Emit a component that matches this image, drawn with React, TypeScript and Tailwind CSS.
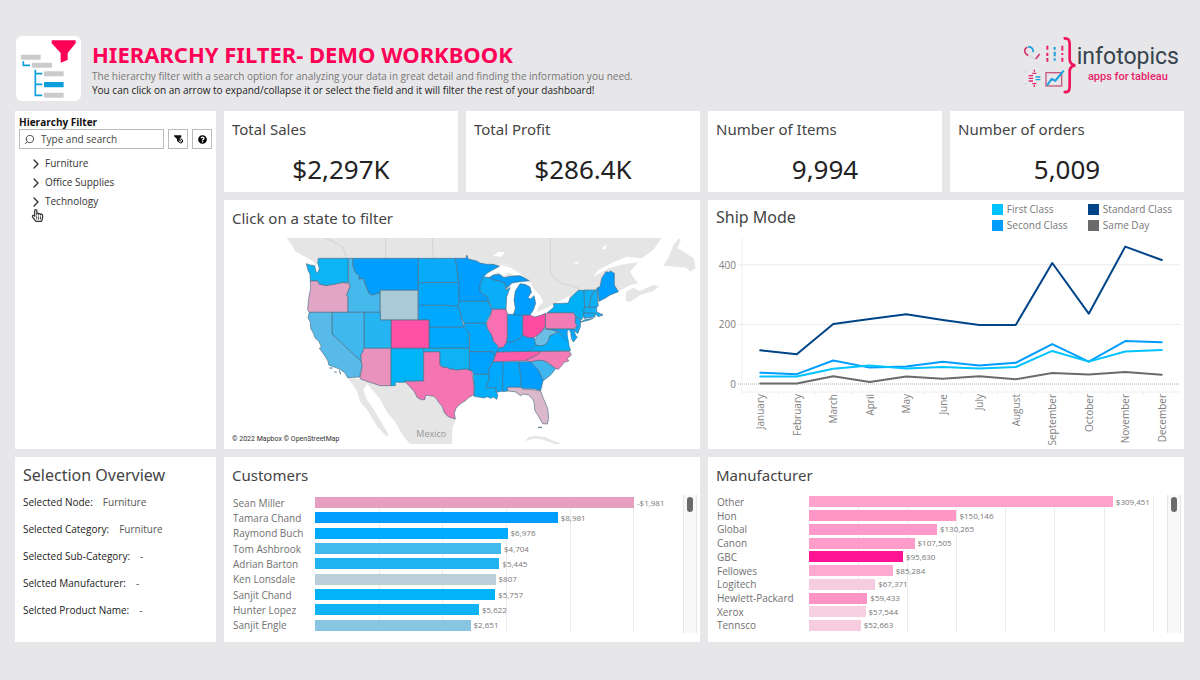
import { useState } from "react";
import { ChevronRight, Search } from "lucide-react";
import { FaQuestionCircle, FaRegHandPointer } from "react-icons/fa";

interface BarItem {
  name: string;
  size: number;
  label: string;
  color: string;
}

interface StateShape {
  id: string;
  fill: string;
  d: string;
}

const categories = ["Furniture", "Office Supplies", "Technology"];

const totals = [
  { title: "Total Sales", value: "$2,297K" },
  { title: "Total Profit", value: "$286.4K" },
  { title: "Number of Items", value: "9,994" },
  { title: "Number of orders", value: "5,009" },
];

const selection = [
  { label: "Selected Node:", value: "Furniture" },
  { label: "Selected Category:", value: "Furniture" },
  { label: "Selected Sub-Category:", value: "-" },
  { label: "Selcted Manufacturer:", value: "-" },
  { label: "Selcted Product Name:", value: "-" },
];

const customers: BarItem[] = [
  { name: "Sean Miller", size: 25043, label: "-$1,981", color: "#e69fc1" },
  { name: "Tamara Chand", size: 19052, label: "$8,981", color: "#009dff" },
  { name: "Raymond Buch", size: 15117, label: "$6,976", color: "#00abff" },
  { name: "Tom Ashbrook", size: 14596, label: "$4,704", color: "#42b9ec" },
  { name: "Adrian Barton", size: 14474, label: "$5,445", color: "#1fb3f2" },
  { name: "Ken Lonsdale", size: 14175, label: "$807", color: "#bacfd7" },
  { name: "Sanjit Chand", size: 14142, label: "$5,757", color: "#02b3f8" },
  { name: "Hunter Lopez", size: 12873, label: "$5,622", color: "#12b3f5" },
  { name: "Sanjit Engle", size: 12209, label: "$2,651", color: "#88c5e0" },
];

const manufacturers: BarItem[] = [
  { name: "Other", size: 309451, label: "$309,451", color: "#ffa3cd" },
  { name: "Hon", size: 150146, label: "$150,146", color: "#ff96c6" },
  { name: "Global", size: 130265, label: "$130,265", color: "#ff9aca" },
  { name: "Canon", size: 107505, label: "$107,505", color: "#ff9cc9" },
  { name: "GBC", size: 95630, label: "$95,630", color: "#ff1493" },
  { name: "Fellowes", size: 85284, label: "$85,284", color: "#ffa8d0" },
  { name: "Logitech", size: 67371, label: "$67,371", color: "#f6cddf" },
  { name: "Hewlett-Packard", size: 59433, label: "$59,433", color: "#ff94c5" },
  { name: "Xerox", size: 57544, label: "$57,544", color: "#f6d1e0" },
  { name: "Tennsco", size: 52663, label: "$52,663", color: "#f6cddf" },
  { name: "", size: 52000, label: "", color: "#ffb4d8" },
];

const months = [
  "January",
  "February",
  "March",
  "April",
  "May",
  "June",
  "July",
  "August",
  "September",
  "October",
  "November",
  "December",
];

const shipModes = [
  {
    name: "Same Day",
    color: "#6b6b6b",
    values: [2, 2, 26, 7, 25, 18, 26, 16, 37, 32, 40, 31],
  },
  {
    name: "Second Class",
    color: "#009dff",
    values: [38, 33, 79, 55, 59, 75, 62, 71, 134, 75, 144, 140],
  },
  {
    name: "First Class",
    color: "#00c3ff",
    values: [25, 25, 51, 62, 52, 57, 52, 57, 111, 75, 109, 114],
  },
  {
    name: "Standard Class",
    color: "#004488",
    values: [113, 100, 201, 218, 234, 215, 198, 198, 406, 236, 461, 416],
  },
];

const legend = [
  { name: "First Class", swatch: "bg-[#00c3ff]" },
  { name: "Standard Class", swatch: "bg-[#004488]" },
  { name: "Second Class", swatch: "bg-[#009dff]" },
  { name: "Same Day", swatch: "bg-[#6b6b6b]" },
];

const states: StateShape[] = [
  { id: "WA", fill: "#0cb4f6", d: "M79,86L90,90L104,92L108,110L113,114L118,100L113,84L115,70H205V142L186,143L165,148L138,152L118,148L113,138H91L90,118L84,106Z" },
  { id: "OR", fill: "#e3a5c6", d: "M91,138H113L118,148L138,152L165,148L186,143L208,145L211,153L200,180L204,185V232H88L83,225L86,190L92,160Z" },
  { id: "ID", fill: "#45b8ec", d: "M205,70H219V92L226,112L238,122L237,132L250,130L257,150L268,176L276,180L290,176L300,172V232H204V185L200,180L211,153L205,142Z" },
  { id: "MT", fill: "#009eff", d: "M219,70H415V166H301L300,172L290,176L276,180L268,176L257,150L250,130L237,132L238,122L226,112L219,92Z" },
  { id: "WY", fill: "#a9cbd8", d: "M301,166H414V255H301Z" },
  { id: "ND", fill: "#08abf7", d: "M415,70H526L530,95L533,120L536,143H415Z" },
  { id: "SD", fill: "#00a8ff", d: "M415,143H536L537,155V198L534,215L520,213L505,211H415Z" },
  { id: "NE", fill: "#00a8ff", d: "M415,211H505L520,213L534,216L541,230L545,255L553,277H447V255H415Z" },
  { id: "KS", fill: "#00a8ff", d: "M447,277H556L561,283L560,287L567,292L568,340H447Z" },
  { id: "CO", fill: "#ff50a5", d: "M333,255H447V340H333Z" },
  { id: "UT", fill: "#25b5f2", d: "M252,232H301V255H333V340H252Z" },
  { id: "NV", fill: "#3fb8ef", d: "M156,232H252V345L247,354L243,358L244,380L156,297Z" },
  { id: "CA", fill: "#57bae8", d: "M88,232H156V297L244,380L247,395L241,410L240,426L203,428L195,414L180,403L163,396L146,390L144,378L130,356L118,340L124,335L116,318L106,310L100,295L92,280L91,262L84,248Z" },
  { id: "AZ", fill: "#e892bd", d: "M252,340H333V452H300L241,432L240,426L247,395L244,380L243,358L247,354Z" },
  { id: "NM", fill: "#00b4f8", d: "M333,340H431V438H375V442H346V452H333Z" },
  { id: "TX", fill: "#f475b2", d: "M431,350H480V390L489,396L500,397L510,402L520,402L528,405L545,403L560,402L576,408L578,430L583,455L581,480L567,487L558,496L548,502L540,507L528,520L523,535L526,552L505,545L494,535L486,513L476,502L470,492L462,484L438,481L434,494L424,494L412,488L403,470L390,455L375,440L431,438Z" },
  { id: "OK", fill: "#0fb2f5", d: "M431,340H568L569,365L568,405L560,402L545,403L528,405L520,402L510,402L500,397L489,396L480,390V350H431Z" },
  { id: "MN", fill: "#009eff", d: "M526,70H558L560,60L565,72L590,78L600,84L620,88L640,88L658,94L625,112L610,125L600,150V170L622,185L626,199H537V155L533,120L530,95Z" },
  { id: "IA", fill: "#06a9f8", d: "M537,199H626L628,208L637,222L630,240L623,252L618,265H552L545,250L541,230L534,215Z" },
  { id: "MO", fill: "#00a8ff", d: "M552,265H618L622,280L636,302L640,318L652,330L656,345L650,352L643,365L638,358L640,350H569V296L560,285L553,277Z" },
  { id: "AR", fill: "#00a2ff", d: "M568,350H640L638,358H646L640,378L628,400L626,418H580L578,408L568,405Z" },
  { id: "LA", fill: "#00b0fa", d: "M580,418H626L628,432L620,450L618,458H648V470L654,480L650,493L640,486L632,490L622,485L612,489L600,487L582,484L583,455Z" },
  { id: "MS", fill: "#00a8ff", d: "M640,380H670V430L668,468L650,472L648,458H618L620,450L628,432L626,418L628,400Z" },
  { id: "AL", fill: "#00a8ff", d: "M670,380H716L722,425L724,457H682L684,468L668,470V430Z" },
  { id: "GA", fill: "#009eff", d: "M716,380H760L775,405L790,435L786,450L782,467L765,462L724,460L722,425Z" },
  { id: "FL", fill: "#dbb9cb", d: "M682,457H724L727,462L765,465L778,468L780,463L790,490L803,520L806,550L802,567L788,566L776,545L764,525L763,505L758,492L745,480L730,477L722,482L705,470L684,468Z" },
  { id: "SC", fill: "#3fb6ee", d: "M752,382L772,376L786,376L800,382L828,400L812,420L790,437L775,405Z" },
  { id: "NC", fill: "#f47cb5", d: "M734,377L760,365L782,349H868L874,360L862,370L866,378L852,382L845,392L835,403L826,400L800,380L786,376L772,376L752,380Z" },
  { id: "TN", fill: "#fb5ba8", d: "M650,350L782,349L776,358L760,365L736,377L640,380Z" },
  { id: "KY", fill: "#00a4ff", d: "M656,340L680,322L700,320L720,310L727,300L745,308L762,308L772,328L760,338L748,349L650,351Z" },
  { id: "WV", fill: "#6bbfe6", d: "M764,318L772,300L785,290L796,272L797,282L815,284L833,290L822,298L810,302L805,318L795,330L780,333L768,330Z" },
  { id: "VA", fill: "#00aeff", d: "M748,349L760,338L768,330L780,333L795,330L805,318L810,302L822,298L834,290L850,305L866,318L868,335L872,347Z" },
  { id: "MD", fill: "#06a4fb", d: "M797,282H882L886,300L892,306L880,321L874,310L872,290L862,288L862,300L870,315L868,322L850,308L836,290L815,284Z" },
  { id: "PA", fill: "#f47cb5", d: "M796,240L802,233H880L888,245L886,265L892,272L882,281H797Z" },
  { id: "NJ", fill: "#0aa8fb", d: "M886,245L902,254L901,275L893,296L882,285L892,272L886,265Z" },
  { id: "OH", fill: "#ff4ba2", d: "M728,240H748L765,246L785,240L796,235V272L785,290L772,300L762,308L745,308L728,300Z" },
  { id: "IN", fill: "#00a4ff", d: "M682,238H728V300L720,310L700,320L680,322L682,305Z" },
  { id: "IL", fill: "#f96fb1", d: "M637,222H678L682,238V305L678,325L670,337L656,338L652,330L640,318L636,302L622,280L620,265L630,245Z" },
  { id: "WI", fill: "#0aaef8", d: "M600,150L610,125L628,128L640,134L660,138L675,145L678,165L690,158L680,185L678,222H637L626,199L622,185L600,170Z" },
  { id: "MI-upper", fill: "#009eff", d: "M628,128L640,120L658,118L672,128L690,124L720,122L735,130L748,137L720,140L695,144L680,160L675,145L660,138L640,134Z" },
  { id: "MI-lower", fill: "#009eff", d: "M706,168L720,146L735,148L750,156L754,172L744,188L752,192L762,182L767,205L760,225L750,240H700L706,220L702,195Z" },
  { id: "NY", fill: "#00b0f5", d: "M802,233L822,216L820,206L865,204L870,190L895,166H912L914,215L912,240L905,254L888,245L880,233Z" },
  { id: "VT", fill: "#10b0f5", d: "M912,165H947L936,180L932,190L928,217H914Z" },
  { id: "NH", fill: "#10b0f5", d: "M947,165L953,158V190L955,213L950,217H928L932,190L936,180Z" },
  { id: "ME", fill: "#009eff", d: "M953,158L960,155L965,130L978,110L986,112L992,108L1003,115V150L1015,170L990,180L975,190L957,199Z" },
  { id: "MA", fill: "#10b0f5", d: "M913,217H950L950,230L968,240L955,245L945,236L911,234Z" },
  { id: "CT", fill: "#10aaf5", d: "M911,234H945V246L912,250Z" },
  { id: "NY-island", fill: "#00b0f5", d: "M900,262L915,254L940,250L925,256Z" },
];

const MAX_CUSTOMER = 28890;
const MAX_MANUFACTURER = 364600;

const App: React.FC = () => {
  return (
    <div className="min-h-screen bg-[#e7e6e8] pt-9 pr-4 pb-9 pl-[15px] font-['Open_Sans',sans-serif] text-[#555]">
      <Header />
      <main className="mt-[10px] grid grid-cols-[201px_repeat(4,minmax(0,1fr))] gap-2">
        <HierarchyFilter />
        {totals.map((total) => (
          <section key={total.title} className="bg-white px-2 pt-2 pb-[3px]">
            <PanelTitle text={total.title} />
            <p className="mt-3 text-center font-['Noto_Sans',sans-serif] text-[26px] leading-9 text-[#222] pb-[2px]">
              {total.value}
            </p>
          </section>
        ))}
        <section className="relative col-span-2 bg-white pt-2 pb-[5px]">
          <div className="px-2">
            <PanelTitle text="Click on a state to filter" />
          </div>
          <StateMap />
          <p className="absolute bottom-1 left-2 font-[Roboto,sans-serif] text-[7px] leading-3 text-[#333]">
            © 2022 Mapbox © OpenStreetMap
          </p>
        </section>
        <section className="col-span-2 bg-white pb-px">
          <div className="flex h-[38px] items-center justify-between pr-3 pb-1 pl-2">
            <PanelTitle text="Ship Mode" large />
            <ul className="grid grid-cols-[96px_auto] text-[10px] leading-4 text-[#777]">
              {legend.map((item) => (
                <li key={item.name} className="flex items-center gap-1">
                  <span className={`h-[11px] w-[11px] ${item.swatch}`} />
                  {item.name}
                </li>
              ))}
            </ul>
          </div>
          <ShipChart />
        </section>
        <section className="bg-white px-2 pt-2">
          <PanelTitle text="Selection Overview" large />
          <dl className="mt-[7px] flex flex-col gap-[7px] text-[10px] leading-5">
            {selection.map((row) => (
              <div key={row.label} className="flex gap-[10px]">
                <dt className="font-medium text-[#222]">{row.label}</dt>
                <dd>{row.value}</dd>
              </div>
            ))}
          </dl>
        </section>
        <section className="col-span-2 bg-white pt-2 pr-[3px] pb-[9px] pl-2">
          <PanelTitle text="Customers" />
          <div className="mt-[10px] flex h-[138px]">
            <BarList
              items={customers}
              max={MAX_CUSTOMER}
              step={5000}
              labelWidth="w-[83px]"
              listHeight="h-[138px]"
            />
            <ScrollTrack />
          </div>
        </section>
        <section className="col-span-2 bg-white pt-2 pr-[3px] pb-[9px] pl-2">
          <PanelTitle text="Manufacturer" />
          <div className="mt-[10px] flex h-[138px]">
            <BarList
              items={manufacturers}
              max={MAX_MANUFACTURER}
              step={50000}
              labelWidth="w-[93px]"
              listHeight="h-[151px]"
            />
            <ScrollTrack />
          </div>
        </section>
      </main>
    </div>
  );
};

interface PanelTitleProps {
  text: string;
  large?: boolean;
}

const PanelTitle: React.FC<PanelTitleProps> = ({ text, large }) => {
  return (
    <h2
      className={`font-['Noto_Sans',sans-serif] leading-5 text-[#444] ${
        large ? "text-[16px]" : "text-[15px]"
      }`}
    >
      {text}
    </h2>
  );
};

const Header: React.FC = () => {
  return (
    <header className="flex items-start">
      <AppIcon />
      <div className="ml-[11px] flex-1 pt-[3px]">
        <h1 className="font-['Noto_Sans',sans-serif] text-[22px] leading-[30px] font-bold text-[#ff0057]">
          HIERARCHY FILTER- DEMO WORKBOOK
        </h1>
        <p className="text-[10px] leading-[14px] text-[#777]">
          The hierarchy filter with a search option for analyzing your data in
          great detail and finding the information you need.
        </p>
        <p className="text-[10px] leading-[14px] font-medium text-[#222]">
          You can click on an arrow to expand/collapse it or select the field
          and it will filter the rest of your dashboard!
        </p>
      </div>
      <div className="flex items-center pr-[5px]">
        <LogoMark />
        <div className="pb-1 font-[Roboto,sans-serif]">
          <p className="text-[23px] leading-[26px] text-[#36444e]">
            infotopics
          </p>
          <p className="text-center text-[11px] leading-[14px] font-medium text-[#e8246c]">
            apps for tableau
          </p>
        </div>
      </div>
    </header>
  );
};

const AppIcon: React.FC = () => {
  return (
    <svg
      className="ml-px h-[65px] w-[65px] rounded-md bg-white"
      aria-hidden="true"
      viewBox="0 0 195 195"
      fill="none"
    >
      <path d="M107 13H179V22L155 51V72L134 80V51L107 22Z" fill="#ff0057" />
      <g fill="#cbcbcb">
        <rect x="15" y="56" width="59" height="15" rx="2" />
        <rect x="48" y="80" width="60" height="15" rx="2" />
        <rect x="84" y="106" width="59" height="15" rx="2" />
        <rect x="84" y="170" width="59" height="15" rx="2" />
      </g>
      <rect x="84" y="138" width="59" height="16" rx="2" fill="#0d9ddb" />
      <path
        d="M22 76V88H42M58 101V178H79M58 113H79M58 145H79"
        stroke="#0d9ddb"
        strokeWidth="5"
      />
    </svg>
  );
};

const LogoMark: React.FC = () => {
  return (
    <svg
      className="h-[60px] w-[54px]"
      aria-hidden="true"
      viewBox="0 0 162 180"
      fill="none"
      strokeWidth="5"
    >
      <path
        d="M122 7C137 6 140 12 140 25V69C140 81 145 87 157 88C145 89 140 95 140 107V150C140 164 137 170 122 168"
        stroke="#f0145c"
        strokeWidth="8"
      />
      <path
        d="M12 34A13 13 0 0 0 6 49A13 13 0 0 0 16 58M38 69L50 54"
        stroke="#d8356e"
      />
      <path d="M14 34A12 12 0 0 1 30 49" stroke="#189fe0" />
      <path d="M22 61L36 69" stroke="#d0dde4" />
      <g strokeWidth="6">
        <path d="M73 29V41M73 50V60M73 66V77M118 29V44M118 51V57M118 65V77" stroke="#e8246c" />
        <path d="M95 33V41M95 47V61M95 67V74" stroke="#189fe0" />
      </g>
      <path
        d="M17 119H30M17 127H30M17 135H30M34 101V107M34 147V153M28 112H40M28 143H40"
        stroke="#e8246c"
        strokeWidth="4"
      />
      <path d="M38 123H52M38 131H52" stroke="#189fe0" strokeWidth="4" />
      <path d="M2 108H12M2 144H12" stroke="#cbdde6" strokeWidth="4" />
      <rect x="69" y="110" width="47" height="40" stroke="#c55781" strokeWidth="4" />
      <path d="M72 148L86 129L97 134L122 104" stroke="#189fe0" strokeWidth="6" />
    </svg>
  );
};

const HierarchyFilter: React.FC = () => {
  const [query, setQuery] = useState<string>("");

  return (
    <section className="row-span-2 bg-white px-1 pt-[5px] text-[10px] text-[#333]">
      <label htmlFor="search" className="block leading-[13px] font-bold text-[#111]">
        Hierarchy Filter
      </label>
      <div className="flex gap-1">
        <div className="flex h-5 flex-1 items-center border border-[#bbb] pl-1">
          <Search
            className="h-[11px] w-[11px] shrink-0 -scale-x-100 text-[#444]"
            strokeWidth={2}
          />
          <input
            id="search"
            className="ml-[6px] w-full min-w-0 outline-none placeholder:text-[#444]"
            placeholder="Type and search"
            value={query}
            onChange={(e) => setQuery(e.target.value)}
          />
        </div>
        <button
          className="flex h-5 w-5 items-center justify-center border border-[#bbb]"
          aria-label="Clear filter"
        >
          <ClearFilterIcon />
        </button>
        <button
          className="flex h-5 w-5 items-center justify-center border border-[#bbb]"
          aria-label="Help"
        >
          <FaQuestionCircle className="h-[9px] w-[9px] text-black" />
        </button>
      </div>
      <ul className="mt-[5px] ml-[9px]">
        {categories
          .filter((name) => name.toLowerCase().includes(query.toLowerCase()))
          .map((name) => (
            <li key={name} className="relative">
              <button className="flex h-[19px] items-center gap-px">
                <ChevronRight className="h-4 w-4" strokeWidth={2} />
                {name}
              </button>
              {name === "Technology" && (
                <FaRegHandPointer className="absolute top-[17px] left-[3px] h-[13px] w-[13px] text-[#333]" />
              )}
            </li>
          ))}
      </ul>
    </section>
  );
};

const ClearFilterIcon: React.FC = () => {
  return (
    <svg className="h-[9px] w-[9px]" aria-hidden="true" viewBox="0 0 27 27">
      <path d="M0 1H22V6L15 13L14 22L9 18V12L0 4Z" fill="#111" />
      <circle cx="20" cy="18" r="6" fill="#fff" stroke="#111" strokeWidth="3" />
      <path d="M11 10L24 22" stroke="#111" strokeWidth="3" />
    </svg>
  );
};

const StateMap: React.FC = () => {
  return (
    <svg
      className="mt-[10px] block w-full"
      viewBox="-168 9 1428 618"
      role="img"
      aria-label="Map of the United States"
      strokeLinejoin="round"
    >
      <g fill="#e5e5e6">
        <path d="M20,9H1145L1120,45L1085,70L1040,65L1000,82L955,105L940,125L985,100L1030,88L1075,82L1050,110L1062,130L1075,145L1050,150L1015,170L957,199L870,240H600L560,72H116L108,92L98,78L70,62L45,48L36,30Z" />
        <path d="M1030,195L1036,172L1060,158L1080,168L1120,150L1137,154L1120,168L1080,180L1050,202Z" />
        <path d="M1150,92L1168,62L1180,30L1197,10L1203,14L1192,40L1215,52L1228,62L1242,70L1247,100L1232,110L1218,98L1195,96Z" />
        <path d="M203,428L300,440L346,446L375,440L430,490L470,480L528,552L517,580L516,627H390L368,600L345,560L320,530L300,492L262,447L250,462L258,490L280,522L300,555L325,598L320,605L292,575L262,525L240,500L232,470L215,445Z" />
        <path d="M735,618L745,607L765,602L795,606L820,617L845,627H825L790,614L765,610Z" />
      </g>
      <g fill="#fff">
        <path d="M608,125L635,105L655,97L668,86L690,92L725,113L728,122L700,120L685,112L672,124L655,110L625,124Z" />
        <path d="M678,222L680,185L695,148L722,138L752,143L764,165L780,180L790,200L775,215L768,240L690,240Z" />
        <path d="M750,240L785,226L822,208L866,184L872,198L860,206L822,219L802,233L765,246Z" />
        <path d="M957,199L1016,168L1040,160L1035,215L970,225Z" />
        <path d="M640,62L655,50L675,52L662,66ZM882,85L898,78L890,88ZM965,40L980,28L975,44Z" />
      </g>
      <path
        d="M135,9L160,20L190,38L200,70M317,9V69M457,9L460,69M811,9V110L822,130L850,148L872,150L895,160V166M665,88L692,96L728,118"
        fill="none"
        stroke="#c8c8c8"
        strokeWidth="2"
      />
      <g stroke="#4f7187" strokeWidth="2">
        {states.map((state) => (
          <path key={state.id} d={state.d} fill={state.fill} />
        ))}
      </g>
      <path d="M866,286L866,305L872,335" fill="none" stroke="#fff" strokeWidth="5" />
      <path
        d="M148,399H158M163,411H170M178,406L182,418M966,236V242M774,577H786"
        stroke="#4f7187"
        strokeWidth="3"
      />
      <text x="409" y="606" fontSize="27" fill="#999">
        Mexico
      </text>
    </svg>
  );
};

const ShipChart: React.FC = () => {
  const left = 34;
  const right = 472;
  const zero = 146;
  const step = (right - left) / months.length;
  const toX = (i: number) => left + step * (i + 0.5);
  const toY = (value: number) => zero - value * 0.298;

  return (
    <svg
      className="block w-full"
      viewBox="0 0 476 210"
      role="img"
      aria-label="Orders by ship mode and month"
      fontSize="10"
      fill="#808080"
    >
      <path d="M34 0V154H472" fill="none" stroke="#eee" />
      {months.map((month, i) => (
        <path key={month} d={`M${left + step * i} 154v3`} stroke="#eee" />
      ))}
      {[0, 200, 400].map((tick) => (
        <g key={tick}>
          <line
            x1={30}
            x2={right}
            y1={toY(tick)}
            y2={toY(tick)}
            stroke={tick === 0 ? "#aaa" : "#eaeaea"}
            strokeDasharray={tick === 0 ? "1 1" : undefined}
          />
          <text x={28} y={toY(tick) + 4} textAnchor="end">
            {tick}
          </text>
        </g>
      ))}
      {shipModes.map((mode) => (
        <polyline
          key={mode.name}
          points={mode.values.map((v, i) => `${toX(i)},${toY(v)}`).join(" ")}
          fill="none"
          stroke={mode.color}
          strokeWidth="2"
          strokeLinecap="round"
          strokeLinejoin="round"
        />
      ))}
      {months.map((month, i) => (
        <text
          key={month}
          transform={`translate(${toX(i) + 4} 156) rotate(-90)`}
          textAnchor="end"
        >
          {month}
        </text>
      ))}
    </svg>
  );
};

interface BarListProps {
  items: BarItem[];
  max: number;
  step: number;
  labelWidth: string;
  listHeight: string;
}

const BarList: React.FC<BarListProps> = ({
  items,
  max,
  step,
  labelWidth,
  listHeight,
}) => {
  const lines = Array.from(
    { length: Math.floor(max / step) },
    (_, i) => ((i + 1) * step * 100) / max
  );

  return (
    <div className="relative flex-1 overflow-hidden">
      <div className="absolute inset-0 flex">
        <div className={`shrink-0 ${labelWidth}`} />
        <div className="relative flex-1">
          {lines.map((line) => (
            <div
              key={line}
              className="absolute h-full w-px bg-[#ececec]"
              style={{ left: `${line}%` }}
            />
          ))}
        </div>
      </div>
      <ul className={`relative flex flex-col ${listHeight}`}>
        {items.map((item) => (
          <li key={item.name} className="flex min-h-0 flex-1 items-center">
            <span
              className={`shrink-0 pl-px text-[10px] leading-3 text-[#707070] ${labelWidth}`}
            >
              {item.name}
            </span>
            <div className="flex flex-1 items-center gap-[3px]">
              <div
                className="h-[11px] shrink-0"
                style={{
                  width: `${(item.size * 100) / max}%`,
                  backgroundColor: item.color,
                }}
              />
              <span className="text-[8px] leading-3 text-[#777]">
                {item.label}
              </span>
            </div>
          </li>
        ))}
      </ul>
    </div>
  );
};

const ScrollTrack: React.FC = () => {
  return (
    <div className="w-[14px] border-x border-[#e6e6e6] bg-[#f8f8f8] pt-[2px]">
      <div className="mx-auto h-[15px] w-[6px] rounded-full bg-[#6b6b6b]" />
    </div>
  );
};

export default App;
